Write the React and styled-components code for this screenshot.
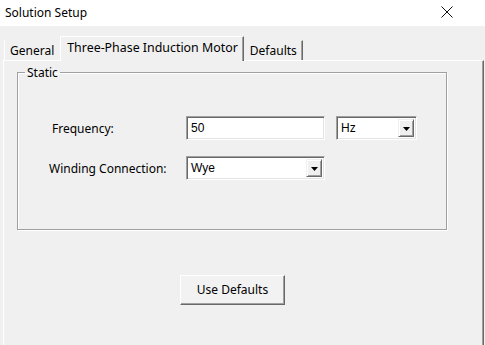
import React, { useState } from 'react';
import styled, { createGlobalStyle } from 'styled-components';

const GlobalStyle = createGlobalStyle`
  html, body {
    margin: 0;
    padding: 0;
    background: #f0f0f0;
  }
  * {
    box-sizing: border-box;
  }
`;

const uiFont = `"Noto Sans", "Open Sans", sans-serif`;
const fieldFont = `"Liberation Sans", Arial, sans-serif`;

const tabs = ['General', 'Three-Phase Induction Motor', 'Defaults'];

const App = () => {
  const [activeTab, setActiveTab] = useState(1);

  return (
    <Window>
      <GlobalStyle />
      <TitleBar>
        <Title>Solution Setup</Title>
        <CloseButton aria-label="Close">
          <svg width="12" height="12" viewBox="0 0 12 12">
            <path d="M0.5 0.5 L11.5 11.5 M11.5 0.5 L0.5 11.5" stroke="#111" strokeWidth="1" fill="none" />
          </svg>
        </CloseButton>
      </TitleBar>

      <TabStrip>
        {tabs.map((t, i) => (
          <Tab key={t} active={i === activeTab} first={i === 0} onClick={() => setActiveTab(i)}>
            {t}
          </Tab>
        ))}
      </TabStrip>

      <Panel>
        <GroupBox>
          <Legend>Static</Legend>
          <FormGrid>
            <Label indent={3}>Frequency:</Label>
            <TextBox>50</TextBox>
            <Select width={81}>
              <span>Hz</span>
              <DropArrow />
            </Select>

            <Label>Winding Connection:</Label>
            <Select width={139}>
              <span>Wye</span>
              <DropArrow />
            </Select>
          </FormGrid>
        </GroupBox>

        <ButtonRow>
          <Button>Use Defaults</Button>
        </ButtonRow>
      </Panel>
    </Window>
  );
};

const DropArrow = () => (
  <ArrowButton>
    <svg width="7" height="4" viewBox="0 0 7 4">
      <path d="M0 0 H7 L3.5 4 Z" fill="#000" />
    </svg>
  </ArrowButton>
);

const Window = styled.div`
  width: 485px;
  height: 345px;
  overflow: hidden;
  background: #f0f0f0;
  font-family: ${uiFont};
  font-size: 12px;
  color: #000;
  display: flex;
  flex-direction: column;
`;

const TitleBar = styled.div`
  height: 26px;
  flex: none;
  background: #fff;
  display: flex;
  align-items: center;
  justify-content: space-between;
  padding: 0 32px 2px 5px;
`;

const Title = styled.div`
  font-size: 12px;
`;

const CloseButton = styled.div`
  display: flex;
  align-items: center;
`;

const TabStrip = styled.div`
  display: flex;
  align-items: flex-end;
  height: 24px;
  margin-top: 10px;
  padding-left: 4px;
  position: relative;
  z-index: 1;
`;

const Tab = styled.div`
  height: ${p => (p.active ? '25px' : '20px')};
  margin-bottom: ${p => (p.active ? '-1px' : '0')};
  padding: ${p => (p.active ? '0 5px 3px 6px' : '0 5px 0 5px')};
  display: flex;
  align-items: center;
  background: #f0f0f0;
  white-space: nowrap;
  cursor: default;
  font-size: ${p => (p.active ? '12.4px' : '12px')};
  border-top: 1px solid ${p => (p.active ? '#fff' : '#f0f0f0')};
  border-left: 1px solid ${p => (p.active || p.first ? '#fff' : 'transparent')};
  border-right: 1px solid ${p => (p.first ? 'transparent' : '#696969')};
  box-shadow: ${p => (p.first ? 'none' : 'inset -1px 0 0 #a0a0a0')};
`;

const Panel = styled.div`
  flex: 1;
  margin: 0 1px 0 3px;
  border-top: 1px solid #fff;
  border-left: 1px solid #fff;
  border-right: 1px solid #696969;
  box-shadow: inset -1px 0 0 #a0a0a0;
  padding: 3px 36px 0 13px;
  display: flex;
  flex-direction: column;
`;

const GroupBox = styled.fieldset`
  margin: 0;
  padding: 0 0 49px 7px;
  border: 1px solid #a0a0a0;
  border-radius: 0;
  box-shadow: inset 1px 1px 0 #fff, 1px 1px 0 #fff;
  min-width: 0;
`;

const Legend = styled.legend`
  padding: 0 2px;
  font-size: 12px;
  line-height: 17px;
`;

const FormGrid = styled.div`
  display: grid;
  grid-template-columns: 126px 139px auto;
  column-gap: 11px;
  row-gap: 16px;
  align-items: center;
  margin-top: 35px;
  padding-left: 24px;
  justify-items: start;
`;

const Label = styled.div`
  padding-left: ${p => p.indent || 0}px;
  font-size: 12px;
`;

const sunken = `
  border-top: 1px solid #a0a0a0;
  border-left: 1px solid #a0a0a0;
  border-bottom: 1px solid #fff;
  border-right: 1px solid #fff;
  box-shadow: inset 1px 1px 0 #696969, inset -1px -1px 0 #e3e3e3;
`;

const TextBox = styled.div`
  width: 139px;
  height: 24px;
  background: #fff;
  ${sunken}
  font-family: ${fieldFont};
  font-size: 12px;
  display: flex;
  align-items: center;
  padding-left: 4px;
`;

const Select = styled.div`
  width: ${p => p.width}px;
  height: 24px;
  background: #fff;
  ${sunken}
  font-family: ${fieldFont};
  font-size: 12px;
  display: flex;
  align-items: center;
  justify-content: space-between;
  padding: 2px 2px 2px 4px;
`;

const ArrowButton = styled.div`
  width: 16px;
  height: 18px;
  background: #f0f0f0;
  border-top: 1px solid #f0f0f0;
  border-left: 1px solid #f0f0f0;
  border-right: 1px solid #696969;
  border-bottom: 1px solid #696969;
  box-shadow: inset 1px 1px 0 #fff, inset -1px -1px 0 #a0a0a0;
  display: flex;
  align-items: center;
  justify-content: center;
  padding-top: 1px;
`;

const ButtonRow = styled.div`
  display: flex;
  margin-top: 45px;
  padding-left: 163px;
`;

const Button = styled.button`
  width: 105px;
  height: 30px;
  font-family: ${uiFont};
  font-size: 12px;
  color: #000;
  background: #f2f2f2;
  border-top: 1px solid #fff;
  border-left: 1px solid #fff;
  border-right: 1px solid #696969;
  border-bottom: 1px solid #696969;
  box-shadow: inset -1px -1px 0 #a0a0a0;
  padding: 0 0 2px;
  cursor: default;
`;

export default App;
